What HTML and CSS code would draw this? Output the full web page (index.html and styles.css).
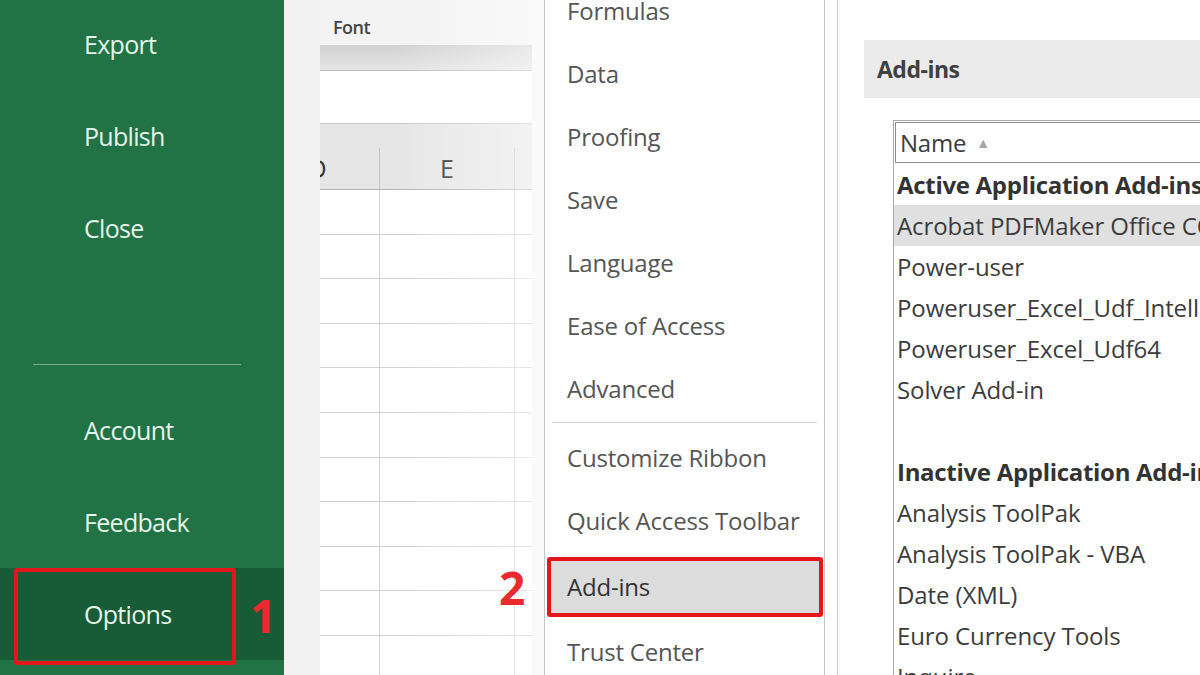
FILE: index.html
```html
<!DOCTYPE html>
<html lang="en">
<head>
    <meta charset="UTF-8">
    <title>Excel Options - Add-ins</title>
    <link rel="stylesheet" href="styles.css">
</head>
<body>

<div class="screen">

    <aside class="backstage">
        <ul class="bs-menu top">
            <li>Export</li>
            <li>Publish</li>
            <li>Close</li>
        </ul>
        <hr class="bs-rule">
        <ul class="bs-menu">
            <li>Account</li>
            <li>Feedback</li>
            <li class="current">
                Options
                <span class="mark-box"></span>
                <span class="step step-one">1</span>
            </li>
        </ul>
    </aside>

    <div class="gutter"></div>

    <div class="sheet">
        <div class="ribbon">Font</div>
        <div class="ribbon-band"></div>
        <div class="namebox"></div>
        <div class="col-head">
            <div class="cell"><span class="cut">D</span></div>
            <div class="cell">E</div>
            <div class="cell"></div>
        </div>
        <div class="rows">
            <div class="row"><div></div><div></div><div></div></div>
            <div class="row"><div></div><div></div><div></div></div>
            <div class="row"><div></div><div></div><div></div></div>
            <div class="row"><div></div><div></div><div></div></div>
            <div class="row"><div></div><div></div><div></div></div>
            <div class="row"><div></div><div></div><div></div></div>
            <div class="row"><div></div><div></div><div></div></div>
            <div class="row"><div></div><div></div><div></div></div>
            <div class="row"><div></div><div></div><div></div></div>
            <div class="row"><div></div><div></div><div></div></div>
            <div class="row"><div></div><div></div><div></div></div>
        </div>
    </div>

    <div class="sheet-edge"></div>

    <nav class="opt-nav">
        <ul>
            <li>Formulas</li>
            <li>Data</li>
            <li>Proofing</li>
            <li>Save</li>
            <li>Language</li>
            <li>Ease of Access</li>
            <li>Advanced</li>
            <li class="sep"></li>
            <li>Customize Ribbon</li>
            <li>Quick Access Toolbar</li>
            <li class="selected">
                Add-ins
                <span class="step step-two">2</span>
            </li>
            <li>Trust Center</li>
        </ul>
    </nav>

    <div class="nav-gap"></div>

    <main class="opt-content">
        <div class="section-bar">Add-ins</div>

        <div class="addin-list">
            <div class="list-head">Name <span class="sort">&#9650;</span></div>
            <div class="item group">Active Application Add-ins</div>
            <div class="item hl">Acrobat PDFMaker Office COM Addin</div>
            <div class="item">Power-user</div>
            <div class="item">Poweruser_Excel_Udf_IntelliSense</div>
            <div class="item">Poweruser_Excel_Udf64</div>
            <div class="item">Solver Add-in</div>
            <div class="item"></div>
            <div class="item group">Inactive Application Add-ins</div>
            <div class="item">Analysis ToolPak</div>
            <div class="item">Analysis ToolPak - VBA</div>
            <div class="item">Date (XML)</div>
            <div class="item">Euro Currency Tools</div>
            <div class="item">Inquire</div>
        </div>
    </main>

</div>

</body>
</html>
```

FILE: styles.css
```css
body {
    margin: 0;
    font-family: "Open Sans", "Noto Sans", sans-serif;
    background: #fff;
    overflow: hidden;
}
ul { list-style: none; margin: 0; padding: 0; }

.screen {
    display: flex;
    width: 1200px;
    height: 675px;
    overflow: hidden;
}

/* backstage (green file menu) */
.backstage {
    width: 284px;
    flex: none;
    background: #217346;
    color: #e6f4e9;
}
.bs-menu li {
    position: relative;
    height: 92px;
    line-height: 92px;
    padding-left: 84px;
    font-size: 25px;
    letter-spacing: -0.7px;
}
.bs-menu.top { margin-top: -2px; }
.bs-menu li.current { background: #185c37; }
.bs-rule {
    border: 0;
    border-top: 1px solid rgba(255, 255, 255, 0.4);
    margin: 90px 43px 19px 33px;
}
.mark-box {
    position: absolute;
    left: 14px;
    right: 48px;
    top: 0;
    bottom: -5px;
    border: 4px solid #e3161e;
    border-radius: 3px;
}
.step {
    position: absolute;
    color: #ea2a2f;
    font-weight: 700;
    font-size: 46px;
    line-height: 1;
    letter-spacing: 0;
}
.step-one { left: 250px; top: 24px; }
.step-two { left: -52px; top: 3px; }

.gutter {
    width: 36px;
    flex: none;
    background: #f1f1f1;
}

/* worksheet behind the dialog */
.sheet {
    position: relative;
    width: 212px;
    flex: none;
    background: #fff;
    overflow: hidden;
}
.sheet::after {
    content: "";
    position: absolute;
    inset: 0;
    background: linear-gradient(to right, rgba(255,255,255,0) 35%, rgba(255,255,255,0.5) 100%);
}
.ribbon {
    height: 45px;
    box-sizing: border-box;
    padding: 14px 0 0 13px;
    line-height: 26px;
    font-size: 18px;
    font-weight: 600;
    color: #444;
    background: #f3f3f3;
    letter-spacing: -0.5px;
}
.ribbon-band {
    height: 25px;
    background: linear-gradient(#d2d2d2, #e4e4e4);
    border-bottom: 1px solid #bcbcbc;
}
.namebox { height: 52px; }
.col-head {
    height: 67px;
    box-sizing: border-box;
    display: grid;
    grid-template-columns: 60px 135px 1fr;
    align-items: end;
    background: #e6e6e6;
    border-top: 1px solid #c9c9c9;
    border-bottom: 1px solid #b3b3b3;
}
.col-head .cell {
    height: 41px;
    line-height: 41px;
    border-right: 1px solid #c4c4c4;
    text-align: center;
    font-size: 25px;
    color: #333;
    overflow: hidden;
}
.col-head .cell:last-child { border-right: 0; }
.col-head .cut { display: inline-block; margin-left: -64px; }
.row {
    display: grid;
    grid-template-columns: 60px 135px 1fr;
    height: 44.6px;
    box-sizing: border-box;
    border-bottom: 1px solid #d2d2d2;
}
.row div { border-right: 1px solid #d2d2d2; }
.row div:last-child { border-right: 0; }

.sheet-edge {
    width: 12px;
    flex: none;
    background: #fafafa;
}

/* Excel Options dialog */
.opt-nav {
    width: 279px;
    flex: none;
    border-left: 1px solid #c4c4c4;
    border-right: 1px solid #c4c4c4;
    background: #fff;
}
.opt-nav ul { margin-top: -21px; }
.opt-nav li {
    position: relative;
    height: 63px;
    line-height: 63px;
    padding-left: 22px;
    font-size: 24px;
    color: #555;
    letter-spacing: -0.2px;
}
.opt-nav li.sep {
    height: 1px;
    margin: 2px 7px 3px;
    padding: 0;
    background: #d4d4d4;
}
.opt-nav li.selected {
    height: 60px;
    box-sizing: border-box;
    line-height: 52px;
    margin: 5px 1px 3px 2px;
    padding-left: 16px;
    border: 4px solid #e3161e;
    border-radius: 3px;
    background: #dcdcdc;
    color: #333;
}

.nav-gap { width: 12px; flex: none; }

.opt-content {
    flex: 1;
    border-left: 1px solid #cfcfcf;
    padding-left: 26px;
    overflow: hidden;
    white-space: nowrap;
}
.section-bar {
    margin-top: 40px;
    height: 58px;
    line-height: 58px;
    padding-left: 13px;
    background: #ebebeb;
    font-size: 23px;
    font-weight: 700;
    color: #404040;
    letter-spacing: -0.5px;
}
.addin-list {
    margin: 22px 0 0 29px;
    border: 1px solid #aaa;
    border-right: 0;
    border-bottom: 0;
}
.list-head {
    margin: 1px 0 1px 1px;
    height: 41px;
    box-sizing: border-box;
    line-height: 39px;
    padding-left: 4px;
    border: 1px solid #8e8e8e;
    border-right: 0;
    font-size: 24px;
    color: #3c3c3c;
    letter-spacing: -0.2px;
}
.sort {
    font-size: 14px;
    color: #a5a5a5;
    vertical-align: 4px;
    margin-left: 4px;
}
.item {
    height: 41px;
    line-height: 41px;
    padding-left: 3px;
    font-size: 24px;
    color: #3c3c3c;
    letter-spacing: -0.1px;
}
.item.group { font-weight: 700; color: #333; letter-spacing: -0.3px; }
.item.hl { background: #e0e0e0; }
```
